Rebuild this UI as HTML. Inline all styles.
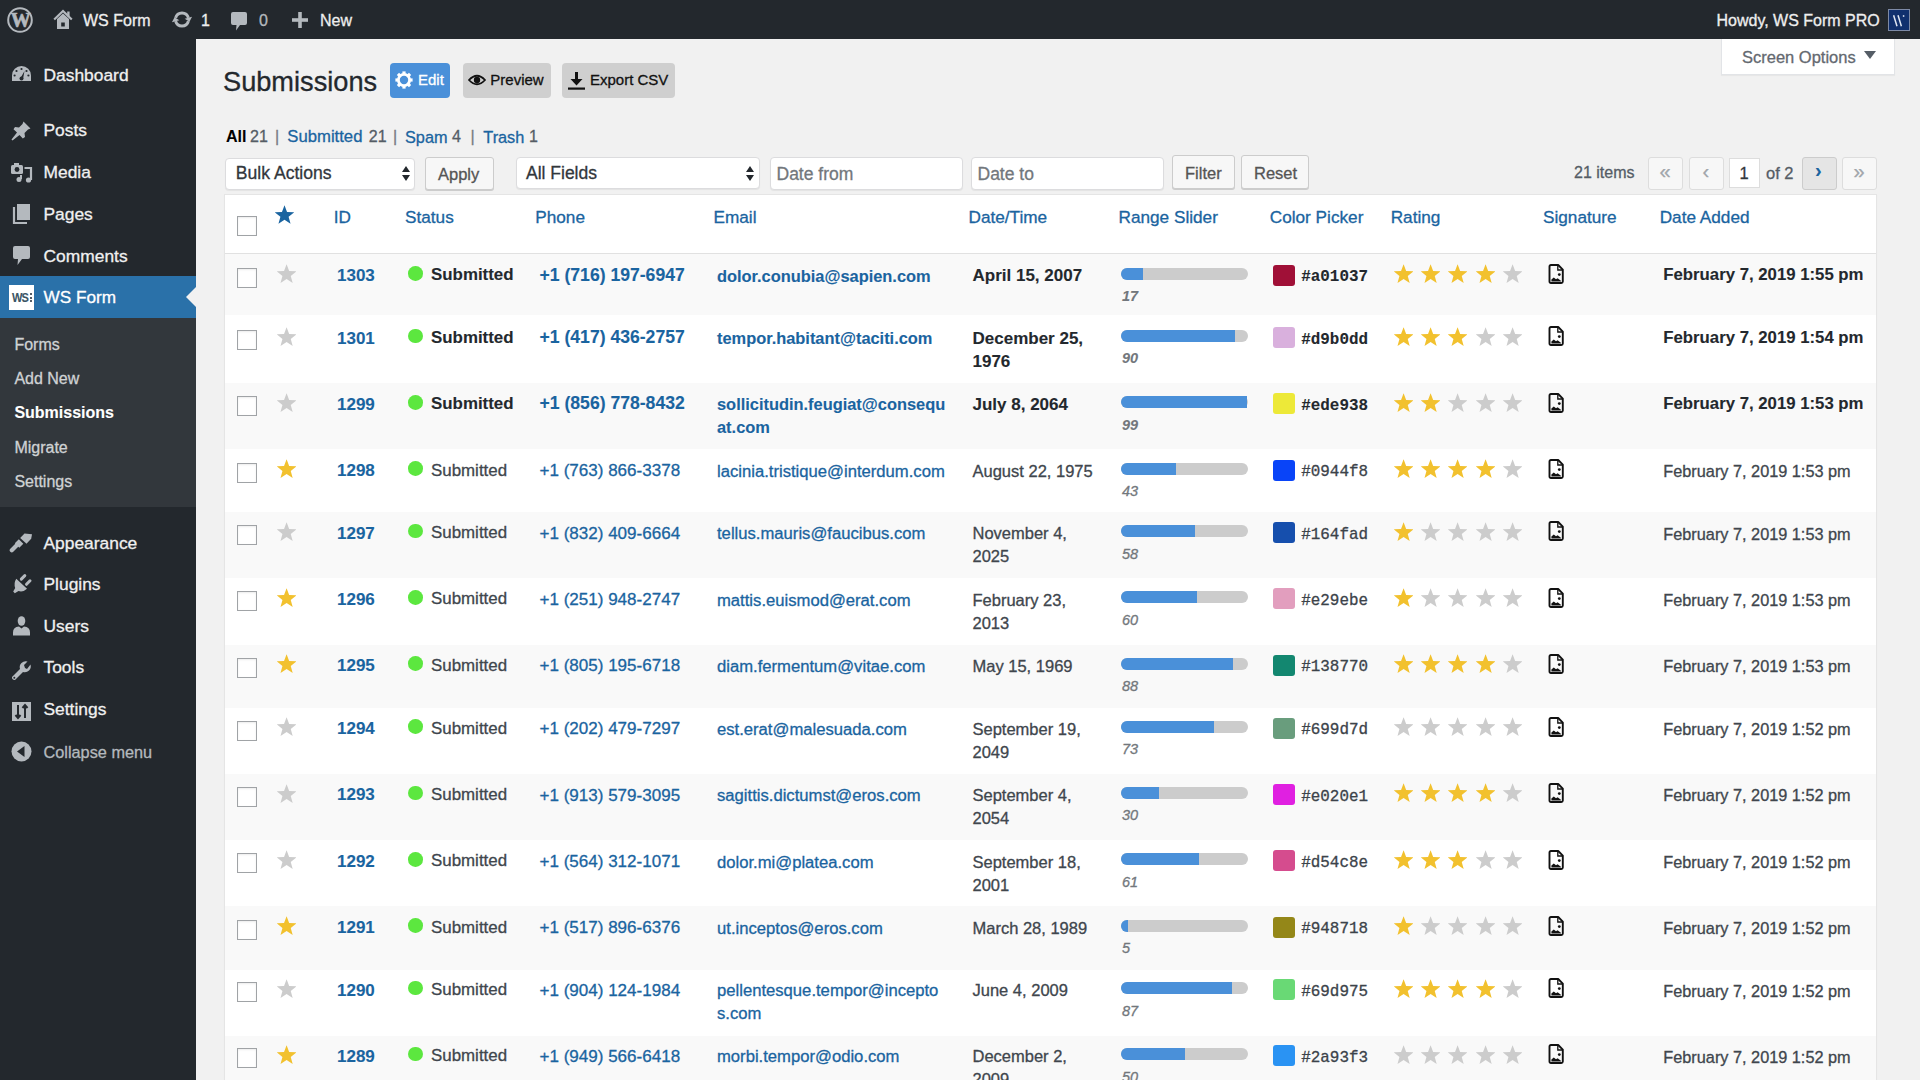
<!DOCTYPE html>
<html><head><meta charset="utf-8"><title>Submissions</title>
<style>
*{margin:0;padding:0;box-sizing:border-box}
html,body{width:1920px;height:1080px;overflow:hidden}
body{background:#f1f1f1;font-family:"Liberation Sans",sans-serif;position:relative}
.a{position:absolute;white-space:nowrap;line-height:1.117;-webkit-text-stroke-width:0.3px}
.a.w{-webkit-text-stroke-width:0.1px}
.b{position:absolute;display:block}
</style></head><body>
<div class="b" style="left:0.00px;top:0.00px;width:1920.00px;height:39.00px;background:#23282d"></div>
<svg class="b" style="left:7.00px;top:6.50px" width="26" height="26" viewBox="0 0 26 26"><circle cx="13" cy="13" r="11.8" fill="none" stroke="#b4b9be" stroke-width="2"/><text x="13" y="20" text-anchor="middle" font-family="Liberation Serif" font-weight="700" font-size="20" fill="#b4b9be" stroke="#b4b9be" stroke-width="0.7" letter-spacing="-1.5">W</text></svg>
<svg class="b" style="left:53.00px;top:9.00px" width="20" height="21" viewBox="0 0 20 21"><path d="M1.2 10.5 L10 2 L18.8 10.5" fill="none" stroke="#b4b9be" stroke-width="2.2"/><rect x="14.2" y="2.5" width="2.4" height="5" fill="#b4b9be"/><path d="M4 10 L10 4.6 L16 10 V20 H4 Z M8.2 13.5 V17.5 H11.8 V13.5 Z" fill="#b4b9be" fill-rule="evenodd"/></svg>
<div class="a" style="left:83.00px;top:11.62px;font-size:16px;color:#eeeeee;">WS Form</div>
<svg class="b" style="left:170.00px;top:9.50px" width="24" height="19" viewBox="0 0 24 19"><path d="M5.63 7.79 A6.6 6.6 0 0 1 18.38 7.79" fill="none" stroke="#b4b9be" stroke-width="3"/><path d="M14.7 8.77 L22.05 6.81 L19.46 11.85 Z" fill="#b4b9be"/><path d="M18.38 11.21 A6.6 6.6 0 0 1 5.63 11.21" fill="none" stroke="#b4b9be" stroke-width="3"/><path d="M9.3 10.23 L1.95 12.19 L4.54 7.15 Z" fill="#b4b9be"/></svg>
<div class="a" style="left:201.00px;top:11.62px;font-size:16px;color:#eeeeee;">1</div>
<svg class="b" style="left:230.00px;top:10.50px" width="18" height="20" viewBox="0 0 18 20"><path d="M3 1 H15 Q17 1 17 3 V12 Q17 14 15 14 H10 L6 19.5 L6.5 14 H3 Q1 14 1 12 V3 Q1 1 3 1 Z" fill="#b4b9be"/></svg>
<div class="a" style="left:259.00px;top:11.62px;font-size:16px;color:#b4b9be;">0</div>
<svg class="b" style="left:291.00px;top:12.00px" width="18" height="16" viewBox="0 0 18 16"><rect x="7.2" y="0" width="3.6" height="16" fill="#b4b9be"/><rect x="1" y="6.2" width="16" height="3.6" fill="#b4b9be"/></svg>
<div class="a" style="left:320.00px;top:11.62px;font-size:16px;color:#eeeeee;">New</div>
<div class="a" style="left:1716.50px;top:11.62px;font-size:16px;color:#eeeeee;">Howdy, WS Form PRO</div>
<div class="b" style="left:1888.00px;top:9.00px;width:22.00px;height:22.00px;background:#10306e;border:1px solid #7d8aa6"></div>
<svg class="b" style="left:1888.00px;top:9.00px" width="22" height="22" viewBox="0 0 22 22"><path d="M5.6 6.2 L9 17.2 M10 6.2 L13.4 17.2" stroke="#dfe6f2" stroke-width="1.5"/><circle cx="15.6" cy="7" r="0.9" fill="#c8d2e6"/></svg>
<div class="b" style="left:0.00px;top:39.00px;width:196.00px;height:1041.00px;background:#23282d"></div>
<div class="b" style="left:0.00px;top:275.50px;width:196.00px;height:42.50px;background:#2a71a9"></div>
<div class="b" style="left:0.00px;top:318.00px;width:196.00px;height:189.00px;background:#32373c"></div>
<svg class="b" style="left:186.00px;top:287.00px" width="10" height="20" viewBox="0 0 10 20"><path d="M10 0 L0 10 L10 20 Z" fill="#f1f1f1"/></svg>
<div class="a" style="left:43.50px;top:66.10px;font-size:17.4px;color:#f0f0f0;">Dashboard</div>
<div class="a" style="left:43.50px;top:121.15px;font-size:17.4px;color:#f0f0f0;">Posts</div>
<div class="a" style="left:43.50px;top:162.85px;font-size:17.4px;color:#f0f0f0;">Media</div>
<div class="a" style="left:43.50px;top:204.55px;font-size:17.4px;color:#f0f0f0;">Pages</div>
<div class="a" style="left:43.50px;top:246.55px;font-size:17.4px;color:#f0f0f0;">Comments</div>
<div class="a" style="left:43.50px;top:288.03px;font-size:17.2px;color:#ffffff;">WS Form</div>
<div class="a" style="left:43.50px;top:533.75px;font-size:17.4px;color:#f0f0f0;">Appearance</div>
<div class="a" style="left:43.50px;top:575.15px;font-size:17.4px;color:#f0f0f0;">Plugins</div>
<div class="a" style="left:43.50px;top:616.85px;font-size:17.4px;color:#f0f0f0;">Users</div>
<div class="a" style="left:43.50px;top:658.45px;font-size:17.4px;color:#f0f0f0;">Tools</div>
<div class="a" style="left:43.50px;top:700.35px;font-size:17.4px;color:#f0f0f0;">Settings</div>
<div class="a" style="left:43.50px;top:743.05px;font-size:16.3px;color:#b4b9be;">Collapse menu</div>
<div class="a" style="left:14.40px;top:335.72px;font-size:16px;color:#cfd2d4;">Forms</div>
<div class="a" style="left:14.40px;top:370.02px;font-size:16px;color:#cfd2d4;">Add New</div>
<div class="a w" style="left:14.40px;top:403.72px;font-size:16px;color:#ffffff;font-weight:700;">Submissions</div>
<div class="a" style="left:14.40px;top:438.62px;font-size:16px;color:#cfd2d4;">Migrate</div>
<div class="a" style="left:14.40px;top:472.82px;font-size:16px;color:#cfd2d4;">Settings</div>
<svg class="b" style="left:11.00px;top:65.00px" width="21" height="18" viewBox="0 0 21 18"><path d="M10.5 1 A9.5 9.5 0 0 0 1 10.5 V16 H20 V10.5 A9.5 9.5 0 0 0 10.5 1 Z" fill="#b4b9be"/><g fill="#23282d"><circle cx="10.5" cy="4" r="1.1"/><circle cx="5.5" cy="6" r="1.1"/><circle cx="15.5" cy="6" r="1.1"/><circle cx="3.6" cy="10.5" r="1.1"/><circle cx="17.4" cy="10.5" r="1.1"/><path d="M9 14 L13.5 6 L12 14 Z"/><circle cx="10.5" cy="13.5" r="2"/></g></svg>
<svg class="b" style="left:10.00px;top:120.00px" width="22" height="21" viewBox="0 0 22 21"><path d="M13.5 1.5 L20.5 8.5 L18 9.5 L14.5 13 L15 17 L12.8 18.5 L9.5 15 L2.5 20.5 L1.5 19.5 L7 12.5 L3.5 9.2 L5 7 L9 7.5 L12.5 4 Z" fill="#b4b9be"/></svg>
<svg class="b" style="left:10.00px;top:162.00px" width="23" height="21" viewBox="0 0 23 21"><rect x="1" y="3" width="12" height="9" rx="1.5" fill="#b4b9be"/><rect x="4" y="1" width="5" height="3" fill="#b4b9be"/><circle cx="7" cy="7.5" r="2.4" fill="#23282d"/><path d="M14.5 6 H21 V18" fill="none" stroke="#b4b9be" stroke-width="2.2"/><circle cx="18.5" cy="18" r="2.6" fill="#b4b9be"/><path d="M11 13 V17" stroke="#b4b9be" stroke-width="2"/><circle cx="9" cy="17.5" r="2.5" fill="#b4b9be"/></svg>
<svg class="b" style="left:12.00px;top:203.00px" width="19" height="21" viewBox="0 0 19 21"><rect x="5" y="1" width="13" height="16" fill="#b4b9be"/><path d="M2 4 V20 H15" fill="none" stroke="#b4b9be" stroke-width="2.2"/></svg>
<svg class="b" style="left:12.00px;top:245.00px" width="19" height="21" viewBox="0 0 19 21"><path d="M3 1 H16 Q18 1 18 3 V12 Q18 14 16 14 H10 L5.5 20 L6 14 H3 Q1 14 1 12 V3 Q1 1 3 1 Z" fill="#b4b9be"/></svg>
<div class="b" style="left:9.00px;top:284.50px;width:25.00px;height:25.00px;background:#ffffff"></div>
<div class="a w" style="left:12.30px;top:290.63px;font-size:13px;color:#3a5566;font-weight:700;letter-spacing:-1px;transform:scaleX(0.85);transform-origin:0 0">WS</div>
<div class="b" style="left:29.50px;top:293.00px;width:2.20px;height:2.20px;background:#555d66"></div>
<div class="b" style="left:29.50px;top:296.60px;width:2.20px;height:2.20px;background:#555d66"></div>
<div class="b" style="left:29.50px;top:300.00px;width:2.20px;height:2.20px;background:#555d66"></div>
<svg class="b" style="left:9.00px;top:532.00px" width="24" height="21" viewBox="0 0 24 21"><path d="M2.8 18.2 L8.5 12.5" stroke="#b4b9be" stroke-width="4.2" stroke-linecap="round"/><path d="M5.8 11.2 L9.8 7.2 L14.3 11.7 L10.3 15.7 Z" fill="#b4b9be"/><path d="M11.2 6 L15.5 1.5 L23 2.2 L22.2 6.8 L17.5 11.8 Z" fill="#b4b9be"/></svg>
<svg class="b" style="left:9.00px;top:572.00px" width="24" height="22" viewBox="0 0 24 22"><path d="M7.3 6.7 L18 16.7 Q14 20.5 9.5 19 L5.8 21.2 L4.2 19.6 L6.2 16 Q4.5 11 7.3 6.7 Z" fill="#b4b9be"/><path d="M12.3 7.1 L15.8 3.6 M17.5 12.3 L21 8.8" stroke="#b4b9be" stroke-width="3" stroke-linecap="round"/></svg>
<svg class="b" style="left:12.00px;top:615.00px" width="19" height="21" viewBox="0 0 19 21"><ellipse cx="9.5" cy="6" rx="3.8" ry="4.8" fill="#b4b9be"/><path d="M1 20.5 V17.5 Q1 12 7 11.5 L9.5 13.5 L12 11.5 Q18 12 18 17.5 V20.5 Z" fill="#b4b9be"/></svg>
<svg class="b" style="left:11.00px;top:660.00px" width="21" height="21" viewBox="0 0 21 21"><path d="M19.5 4.5 A6 6 0 0 1 12 12 L4 20 A2.5 2.5 0 0 1 1 17 L9 9 A6 6 0 0 1 16.5 1.5 L13 5 L14 8 L16 9 Z" fill="#b4b9be"/><circle cx="3.3" cy="17.7" r="1" fill="#23282d"/></svg>
<svg class="b" style="left:12.00px;top:702.00px" width="19" height="19" viewBox="0 0 19 19"><rect x="0" y="0" width="19" height="19" fill="#b4b9be"/><path d="M6 3 V16 M3.5 13 L6 16 L8.5 13 M13 16 V3 M10.5 6 L13 3 L15.5 6" stroke="#23282d" stroke-width="2" fill="none"/></svg>
<svg class="b" style="left:11.00px;top:741.00px" width="21" height="21" viewBox="0 0 21 21"><circle cx="10.5" cy="10.5" r="10" fill="#b4b9be"/><path d="M13.5 5 V16 L6 10.5 Z" fill="#23282d"/></svg>
<div class="b" style="left:1721.00px;top:39.00px;width:174.00px;height:35.50px;background:#ffffff;border:1px solid #e2e4e7;border-top:none;box-shadow:0 1px 1px rgba(0,0,0,.04)"></div>
<div class="a" style="left:1742.00px;top:47.67px;font-size:16.5px;color:#646970;">Screen Options</div>
<svg class="b" style="left:1864.00px;top:51.00px" width="12" height="8" viewBox="0 0 12 8"><path d="M0 0 H12 L6 8 Z" fill="#555d66"/></svg>
<div class="a" style="left:223.00px;top:66.58px;font-size:27.2px;color:#23282d;">Submissions</div>
<div class="b" style="left:390.00px;top:62.75px;width:60.00px;height:35.00px;background:#4a90d9;border-radius:4px"></div>
<svg class="b" style="left:395.00px;top:71.00px" width="18" height="18" viewBox="0 0 18 18"><g transform="translate(9 9)"><circle r="5.6" fill="none" stroke="#fff" stroke-width="2.8"/><rect x="-1.6" y="-8.6" width="3.2" height="3.6" fill="#fff" transform="rotate(0)"/><rect x="-1.6" y="-8.6" width="3.2" height="3.6" fill="#fff" transform="rotate(45)"/><rect x="-1.6" y="-8.6" width="3.2" height="3.6" fill="#fff" transform="rotate(90)"/><rect x="-1.6" y="-8.6" width="3.2" height="3.6" fill="#fff" transform="rotate(135)"/><rect x="-1.6" y="-8.6" width="3.2" height="3.6" fill="#fff" transform="rotate(180)"/><rect x="-1.6" y="-8.6" width="3.2" height="3.6" fill="#fff" transform="rotate(225)"/><rect x="-1.6" y="-8.6" width="3.2" height="3.6" fill="#fff" transform="rotate(270)"/><rect x="-1.6" y="-8.6" width="3.2" height="3.6" fill="#fff" transform="rotate(315)"/></g></svg>
<div class="a" style="left:418.00px;top:72.02px;font-size:15px;color:#ffffff;">Edit</div>
<div class="b" style="left:462.50px;top:63.00px;width:88.00px;height:34.50px;background:#cfcfcf;border-radius:4px"></div>
<svg class="b" style="left:468.00px;top:74.00px" width="18" height="12" viewBox="0 0 18 12"><path d="M1 6 Q9 -2.5 17 6 Q9 14.5 1 6 Z" fill="none" stroke="#111" stroke-width="1.8"/><circle cx="9" cy="6" r="3.2" fill="#111"/></svg>
<div class="a" style="left:490.30px;top:72.02px;font-size:15px;color:#111111;">Preview</div>
<div class="b" style="left:562.00px;top:63.00px;width:112.50px;height:34.50px;background:#cfcfcf;border-radius:4px"></div>
<svg class="b" style="left:568.00px;top:72.00px" width="17" height="18" viewBox="0 0 17 18"><rect x="7" y="0" width="3" height="9" fill="#111"/><path d="M2.5 7 H14.5 L8.5 13.5 Z" fill="#111"/><rect x="0" y="15.5" width="17" height="2.2" fill="#111"/></svg>
<div class="a" style="left:590.00px;top:72.02px;font-size:15px;color:#111111;">Export CSV</div>
<div class="a w" style="left:226.00px;top:127.82px;font-size:16px;color:#000000;font-weight:700;">All</div>
<div class="a" style="left:250.00px;top:128.22px;font-size:16px;color:#555d66;">21</div>
<div class="a" style="left:275.00px;top:128.22px;font-size:16px;color:#787c82;">|</div>
<div class="a" style="left:287.30px;top:127.59px;font-size:16.7px;color:#1a64a0;">Submitted</div>
<div class="a" style="left:368.75px;top:128.22px;font-size:16px;color:#555d66;">21</div>
<div class="a" style="left:393.00px;top:128.22px;font-size:16px;color:#787c82;">|</div>
<div class="a" style="left:405.00px;top:127.95px;font-size:16.3px;color:#1a64a0;">Spam</div>
<div class="a" style="left:452.00px;top:128.22px;font-size:16px;color:#555d66;">4</div>
<div class="a" style="left:470.50px;top:128.22px;font-size:16px;color:#787c82;">|</div>
<div class="a" style="left:483.30px;top:127.95px;font-size:16.3px;color:#1a64a0;">Trash</div>
<div class="a" style="left:529.00px;top:128.22px;font-size:16px;color:#555d66;">1</div>
<div class="b" style="left:224.75px;top:157.50px;width:190.50px;height:32.50px;background:#fff;border:1px solid #dcdcde;border-radius:4px;box-shadow:0 1px 1px rgba(0,0,0,.06)"></div>
<div class="a" style="left:235.75px;top:164.07px;font-size:17.6px;color:#32373c;">Bulk Actions</div>
<svg class="b" style="left:402.00px;top:165.50px" width="8" height="15" viewBox="0 0 8 15"><path d="M0 6 L4 0 L8 6 Z M0 9 L4 15 L8 9 Z" fill="#23282d"/></svg>
<div class="b" style="left:424.60px;top:156.60px;width:69.00px;height:33.80px;background:#f7f7f7;border:1px solid #cccccc;border-radius:3px;box-shadow:0 1px 0 #cccccc"></div>
<div class="a" style="left:438.00px;top:165.07px;font-size:16.5px;color:#555555;">Apply</div>
<div class="b" style="left:516.00px;top:157.00px;width:243.50px;height:32.00px;background:#fff;border:1px solid #dcdcde;border-radius:4px;box-shadow:0 1px 1px rgba(0,0,0,.06)"></div>
<div class="a" style="left:526.00px;top:164.16px;font-size:17.5px;color:#32373c;">All Fields</div>
<svg class="b" style="left:746.00px;top:165.50px" width="8" height="15" viewBox="0 0 8 15"><path d="M0 6 L4 0 L8 6 Z M0 9 L4 15 L8 9 Z" fill="#23282d"/></svg>
<div class="b" style="left:770.00px;top:156.70px;width:193.20px;height:33.50px;background:#fff;border:1px solid #dcdcde;border-radius:4px;box-shadow:0 1px 1px rgba(0,0,0,.06)"></div>
<div class="a" style="left:776.50px;top:164.76px;font-size:17.5px;color:#72777c;">Date from</div>
<div class="b" style="left:971.40px;top:156.70px;width:193.00px;height:33.50px;background:#fff;border:1px solid #dcdcde;border-radius:4px;box-shadow:0 1px 1px rgba(0,0,0,.06)"></div>
<div class="a" style="left:977.50px;top:164.76px;font-size:17.5px;color:#72777c;">Date to</div>
<div class="b" style="left:1171.70px;top:155.20px;width:63.50px;height:34.00px;background:#f7f7f7;border:1px solid #cccccc;border-radius:3px;box-shadow:0 1px 0 #cccccc"></div>
<div class="a" style="left:1185.00px;top:163.67px;font-size:16.5px;color:#555555;">Filter</div>
<div class="b" style="left:1240.50px;top:155.20px;width:68.20px;height:34.00px;background:#f7f7f7;border:1px solid #cccccc;border-radius:3px;box-shadow:0 1px 0 #cccccc"></div>
<div class="a" style="left:1254.00px;top:163.67px;font-size:16.5px;color:#555555;">Reset</div>
<div class="a" style="left:1574.00px;top:164.12px;font-size:16px;color:#555d66;">21 items</div>
<div class="b" style="left:1648.00px;top:156.50px;width:35.40px;height:33.00px;background:#f7f7f7;border:1px solid #dddddd;border-radius:3px"></div>
<div class="a" style="left:1659.50px;top:159.50px;font-size:20px;color:#a0a5aa;">&laquo;</div>
<div class="b" style="left:1688.70px;top:156.50px;width:35.00px;height:33.00px;background:#f7f7f7;border:1px solid #dddddd;border-radius:3px"></div>
<div class="a" style="left:1702.50px;top:159.50px;font-size:20px;color:#a0a5aa;">&lsaquo;</div>
<div class="b" style="left:1729.00px;top:157.70px;width:30.60px;height:30.70px;background:#fff;border:1px solid #dddddd"></div>
<div class="a" style="left:1739.50px;top:164.17px;font-size:16.5px;color:#32373c;">1</div>
<div class="a" style="left:1766.00px;top:164.17px;font-size:16.5px;color:#555d66;">of 2</div>
<div class="b" style="left:1801.70px;top:156.50px;width:35.40px;height:33.00px;background:#e5e5e5;border:1px solid #cccccc;border-radius:3px"></div>
<div class="a w" style="left:1815.00px;top:159.10px;font-size:20px;color:#1a64a0;font-weight:700;">&rsaquo;</div>
<div class="b" style="left:1842.00px;top:156.50px;width:34.50px;height:33.00px;background:#f7f7f7;border:1px solid #dddddd;border-radius:3px"></div>
<div class="a" style="left:1853.50px;top:159.50px;font-size:20px;color:#a0a5aa;">&raquo;</div>
<div class="b" style="left:224.00px;top:194.00px;width:1652.50px;height:888.00px;background:#fff;border:1px solid #e5e5e5;box-shadow:0 1px 1px rgba(0,0,0,.04)"></div>
<div class="b" style="left:225.00px;top:253.50px;width:1650.50px;height:61.50px;background:#f9f9f9"></div>
<div class="b" style="left:225.00px;top:383.00px;width:1650.50px;height:66.00px;background:#f9f9f9"></div>
<div class="b" style="left:225.00px;top:512.00px;width:1650.50px;height:66.30px;background:#f9f9f9"></div>
<div class="b" style="left:225.00px;top:644.60px;width:1650.50px;height:63.40px;background:#f9f9f9"></div>
<div class="b" style="left:225.00px;top:774.10px;width:1650.50px;height:66.10px;background:#f9f9f9"></div>
<div class="b" style="left:225.00px;top:906.30px;width:1650.50px;height:63.30px;background:#f9f9f9"></div>
<div class="b" style="left:225.00px;top:1035.70px;width:1650.50px;height:66.30px;background:#f9f9f9"></div>
<div class="b" style="left:225.00px;top:252.50px;width:1650.50px;height:1.00px;background:#e1e1e1"></div>
<div class="b" style="left:237.30px;top:216.00px;width:20.00px;height:20.00px;background:#fff;border:1.3px solid #a0a3a6;box-shadow:inset 0 1px 2px rgba(0,0,0,.08)"></div>
<svg class="b" style="left:274.50px;top:205.20px" width="19" height="19" viewBox="0 0 19 19"><polygon points="9.50,0.21 12.04,6.99 19.27,7.31 13.60,11.81 15.54,18.79 9.50,14.79 3.46,18.79 5.40,11.81 -0.27,7.31 6.96,6.99" fill="#1a64a0"/></svg>
<div class="a" style="left:333.75px;top:208.13px;font-size:17.2px;color:#1a64a0;">ID</div>
<div class="a" style="left:405.00px;top:208.13px;font-size:17.2px;color:#1a64a0;">Status</div>
<div class="a" style="left:535.25px;top:208.13px;font-size:17.2px;color:#1a64a0;">Phone</div>
<div class="a" style="left:713.50px;top:208.13px;font-size:17.2px;color:#1a64a0;">Email</div>
<div class="a" style="left:968.50px;top:208.13px;font-size:17.2px;color:#1a64a0;">Date/Time</div>
<div class="a" style="left:1118.50px;top:208.13px;font-size:17.2px;color:#1a64a0;">Range Slider</div>
<div class="a" style="left:1269.75px;top:208.13px;font-size:17.2px;color:#1a64a0;">Color Picker</div>
<div class="a" style="left:1390.70px;top:208.13px;font-size:17.2px;color:#1a64a0;">Rating</div>
<div class="a" style="left:1543.00px;top:208.13px;font-size:17.2px;color:#1a64a0;">Signature</div>
<div class="a" style="left:1659.70px;top:208.13px;font-size:17.2px;color:#1a64a0;">Date Added</div>
<div class="b" style="left:237.30px;top:267.50px;width:20.00px;height:20.00px;background:#fff;border:1.3px solid #a0a3a6;box-shadow:inset 0 1px 2px rgba(0,0,0,.08)"></div>
<svg class="b" style="left:277.05px;top:264.25px" width="19.2" height="19.2" viewBox="0 0 19.2 19.2"><polygon points="9.60,0.21 12.16,7.06 19.47,7.38 13.75,11.94 15.70,18.99 9.60,14.95 3.50,18.99 5.45,11.94 -0.27,7.38 7.04,7.06" fill="#cccccc"/></svg>
<div class="a w" style="left:337.00px;top:266.06px;font-size:17px;color:#1a64a0;font-weight:700;">1303</div>
<div class="b" style="left:408.30px;top:266.25px;width:14.60px;height:14.60px;background:#5ce73f;border-radius:50%"></div>
<div class="a w" style="left:431.00px;top:266.16px;font-size:16.9px;color:#23282d;font-weight:700;">Submitted</div>
<div class="a w" style="left:539.50px;top:265.52px;font-size:17.6px;color:#1a64a0;font-weight:700;">+1 (716) 197-6947</div>
<div class="a w" style="left:717.00px;top:266.61px;font-size:16.4px;color:#1a64a0;font-weight:700;line-height:23px;margin-top:-2.01px">dolor.conubia@sapien.com</div>
<div class="a w" style="left:972.50px;top:266.06px;font-size:17px;color:#23282d;font-weight:700;line-height:23px;margin-top:-2.01px">April 15, 2007</div>
<div class="b" style="left:1121.40px;top:267.65px;width:126.60px;height:12.00px;background:#cccccc;border-radius:6px;overflow:hidden"></div>
<div class="b" style="left:1121.40px;top:267.65px;width:21.52px;height:12.00px;background:#4a90d9;border-radius:6px 0 0 6px"></div>
<div class="a w" style="left:1122.00px;top:287.83px;font-size:14.5px;color:#72777c;font-weight:700;font-style:italic">17</div>
<div class="b" style="left:1272.50px;top:264.50px;width:22.00px;height:21.00px;background:#a01037;border-radius:3px"></div>
<div class="a w" style="left:1301.25px;top:269.06px;font-size:15.9px;color:#23282d;font-weight:700;font-family:Liberation Mono">#a01037</div>
<svg class="b" style="left:1393.90px;top:264.20px" width="19.2" height="19.2" viewBox="0 0 19.2 19.2"><polygon points="9.60,0.21 12.16,7.06 19.47,7.38 13.75,11.94 15.70,18.99 9.60,14.95 3.50,18.99 5.45,11.94 -0.27,7.38 7.04,7.06" fill="#f2c12e"/></svg>
<svg class="b" style="left:1421.10px;top:264.20px" width="19.2" height="19.2" viewBox="0 0 19.2 19.2"><polygon points="9.60,0.21 12.16,7.06 19.47,7.38 13.75,11.94 15.70,18.99 9.60,14.95 3.50,18.99 5.45,11.94 -0.27,7.38 7.04,7.06" fill="#f2c12e"/></svg>
<svg class="b" style="left:1448.30px;top:264.20px" width="19.2" height="19.2" viewBox="0 0 19.2 19.2"><polygon points="9.60,0.21 12.16,7.06 19.47,7.38 13.75,11.94 15.70,18.99 9.60,14.95 3.50,18.99 5.45,11.94 -0.27,7.38 7.04,7.06" fill="#f2c12e"/></svg>
<svg class="b" style="left:1475.50px;top:264.20px" width="19.2" height="19.2" viewBox="0 0 19.2 19.2"><polygon points="9.60,0.21 12.16,7.06 19.47,7.38 13.75,11.94 15.70,18.99 9.60,14.95 3.50,18.99 5.45,11.94 -0.27,7.38 7.04,7.06" fill="#f2c12e"/></svg>
<svg class="b" style="left:1502.70px;top:264.20px" width="19.2" height="19.2" viewBox="0 0 19.2 19.2"><polygon points="9.60,0.21 12.16,7.06 19.47,7.38 13.75,11.94 15.70,18.99 9.60,14.95 3.50,18.99 5.45,11.94 -0.27,7.38 7.04,7.06" fill="#cccccc"/></svg>
<svg class="b" style="left:1548.00px;top:263.85px" width="16" height="20" viewBox="0 0 16 20"><path d="M3 1 H10.2 L14.8 5.6 V17.5 Q14.8 19 13.3 19 H3 Q1.5 19 1.5 17.5 V2.5 Q1.5 1 3 1 Z" fill="none" stroke="#111" stroke-width="1.9" stroke-linejoin="round"/><path d="M9.8 1.5 V6 H14.3" fill="none" stroke="#111" stroke-width="1.3"/><circle cx="11.3" cy="10.6" r="1.4" fill="#111"/><path d="M3.4 17.4 V15.6 L5.8 13.4 L8 15.3 L9.6 14.3 L12.9 16.8 V17.4 Z" fill="#111"/></svg>
<div class="a w" style="left:1663.30px;top:266.29px;font-size:16.75px;color:#23282d;font-weight:700;">February 7, 2019 1:55 pm</div>
<div class="b" style="left:237.30px;top:330.00px;width:20.00px;height:20.00px;background:#fff;border:1.3px solid #a0a3a6;box-shadow:inset 0 1px 2px rgba(0,0,0,.08)"></div>
<svg class="b" style="left:277.05px;top:326.75px" width="19.2" height="19.2" viewBox="0 0 19.2 19.2"><polygon points="9.60,0.21 12.16,7.06 19.47,7.38 13.75,11.94 15.70,18.99 9.60,14.95 3.50,18.99 5.45,11.94 -0.27,7.38 7.04,7.06" fill="#cccccc"/></svg>
<div class="a w" style="left:337.00px;top:328.56px;font-size:17px;color:#1a64a0;font-weight:700;">1301</div>
<div class="b" style="left:408.30px;top:328.75px;width:14.60px;height:14.60px;background:#5ce73f;border-radius:50%"></div>
<div class="a w" style="left:431.00px;top:328.66px;font-size:16.9px;color:#23282d;font-weight:700;">Submitted</div>
<div class="a w" style="left:539.50px;top:328.02px;font-size:17.6px;color:#1a64a0;font-weight:700;">+1 (417) 436-2757</div>
<div class="a w" style="left:717.00px;top:329.11px;font-size:16.4px;color:#1a64a0;font-weight:700;line-height:23px;margin-top:-2.01px">tempor.habitant@taciti.com</div>
<div class="a w" style="left:972.50px;top:328.56px;font-size:17px;color:#23282d;font-weight:700;line-height:23px;margin-top:-2.01px">December 25,<br>1976</div>
<div class="b" style="left:1121.40px;top:330.15px;width:126.60px;height:12.00px;background:#cccccc;border-radius:6px;overflow:hidden"></div>
<div class="b" style="left:1121.40px;top:330.15px;width:113.94px;height:12.00px;background:#4a90d9;border-radius:6px 0 0 6px"></div>
<div class="a w" style="left:1122.00px;top:350.33px;font-size:14.5px;color:#72777c;font-weight:700;font-style:italic">90</div>
<div class="b" style="left:1272.50px;top:327.00px;width:22.00px;height:21.00px;background:#d9b0dd;border-radius:3px"></div>
<div class="a w" style="left:1301.25px;top:331.56px;font-size:15.9px;color:#23282d;font-weight:700;font-family:Liberation Mono">#d9b0dd</div>
<svg class="b" style="left:1393.90px;top:326.70px" width="19.2" height="19.2" viewBox="0 0 19.2 19.2"><polygon points="9.60,0.21 12.16,7.06 19.47,7.38 13.75,11.94 15.70,18.99 9.60,14.95 3.50,18.99 5.45,11.94 -0.27,7.38 7.04,7.06" fill="#f2c12e"/></svg>
<svg class="b" style="left:1421.10px;top:326.70px" width="19.2" height="19.2" viewBox="0 0 19.2 19.2"><polygon points="9.60,0.21 12.16,7.06 19.47,7.38 13.75,11.94 15.70,18.99 9.60,14.95 3.50,18.99 5.45,11.94 -0.27,7.38 7.04,7.06" fill="#f2c12e"/></svg>
<svg class="b" style="left:1448.30px;top:326.70px" width="19.2" height="19.2" viewBox="0 0 19.2 19.2"><polygon points="9.60,0.21 12.16,7.06 19.47,7.38 13.75,11.94 15.70,18.99 9.60,14.95 3.50,18.99 5.45,11.94 -0.27,7.38 7.04,7.06" fill="#f2c12e"/></svg>
<svg class="b" style="left:1475.50px;top:326.70px" width="19.2" height="19.2" viewBox="0 0 19.2 19.2"><polygon points="9.60,0.21 12.16,7.06 19.47,7.38 13.75,11.94 15.70,18.99 9.60,14.95 3.50,18.99 5.45,11.94 -0.27,7.38 7.04,7.06" fill="#cccccc"/></svg>
<svg class="b" style="left:1502.70px;top:326.70px" width="19.2" height="19.2" viewBox="0 0 19.2 19.2"><polygon points="9.60,0.21 12.16,7.06 19.47,7.38 13.75,11.94 15.70,18.99 9.60,14.95 3.50,18.99 5.45,11.94 -0.27,7.38 7.04,7.06" fill="#cccccc"/></svg>
<svg class="b" style="left:1548.00px;top:326.35px" width="16" height="20" viewBox="0 0 16 20"><path d="M3 1 H10.2 L14.8 5.6 V17.5 Q14.8 19 13.3 19 H3 Q1.5 19 1.5 17.5 V2.5 Q1.5 1 3 1 Z" fill="none" stroke="#111" stroke-width="1.9" stroke-linejoin="round"/><path d="M9.8 1.5 V6 H14.3" fill="none" stroke="#111" stroke-width="1.3"/><circle cx="11.3" cy="10.6" r="1.4" fill="#111"/><path d="M3.4 17.4 V15.6 L5.8 13.4 L8 15.3 L9.6 14.3 L12.9 16.8 V17.4 Z" fill="#111"/></svg>
<div class="a w" style="left:1663.30px;top:328.79px;font-size:16.75px;color:#23282d;font-weight:700;">February 7, 2019 1:54 pm</div>
<div class="b" style="left:237.30px;top:396.25px;width:20.00px;height:20.00px;background:#fff;border:1.3px solid #a0a3a6;box-shadow:inset 0 1px 2px rgba(0,0,0,.08)"></div>
<svg class="b" style="left:277.05px;top:393.00px" width="19.2" height="19.2" viewBox="0 0 19.2 19.2"><polygon points="9.60,0.21 12.16,7.06 19.47,7.38 13.75,11.94 15.70,18.99 9.60,14.95 3.50,18.99 5.45,11.94 -0.27,7.38 7.04,7.06" fill="#cccccc"/></svg>
<div class="a w" style="left:337.00px;top:394.81px;font-size:17px;color:#1a64a0;font-weight:700;">1299</div>
<div class="b" style="left:408.30px;top:395.00px;width:14.60px;height:14.60px;background:#5ce73f;border-radius:50%"></div>
<div class="a w" style="left:431.00px;top:394.91px;font-size:16.9px;color:#23282d;font-weight:700;">Submitted</div>
<div class="a w" style="left:539.50px;top:394.27px;font-size:17.6px;color:#1a64a0;font-weight:700;">+1 (856) 778-8432</div>
<div class="a w" style="left:717.00px;top:395.36px;font-size:16.4px;color:#1a64a0;font-weight:700;line-height:23px;margin-top:-2.01px">sollicitudin.feugiat@consequ<br>at.com</div>
<div class="a w" style="left:972.50px;top:394.81px;font-size:17px;color:#23282d;font-weight:700;line-height:23px;margin-top:-2.01px">July 8, 2064</div>
<div class="b" style="left:1121.40px;top:396.40px;width:126.60px;height:12.00px;background:#cccccc;border-radius:6px;overflow:hidden"></div>
<div class="b" style="left:1121.40px;top:396.40px;width:125.33px;height:12.00px;background:#4a90d9;border-radius:6px 0 0 6px"></div>
<div class="a w" style="left:1122.00px;top:416.58px;font-size:14.5px;color:#72777c;font-weight:700;font-style:italic">99</div>
<div class="b" style="left:1272.50px;top:393.25px;width:22.00px;height:21.00px;background:#ede938;border-radius:3px"></div>
<div class="a w" style="left:1301.25px;top:397.81px;font-size:15.9px;color:#23282d;font-weight:700;font-family:Liberation Mono">#ede938</div>
<svg class="b" style="left:1393.90px;top:392.95px" width="19.2" height="19.2" viewBox="0 0 19.2 19.2"><polygon points="9.60,0.21 12.16,7.06 19.47,7.38 13.75,11.94 15.70,18.99 9.60,14.95 3.50,18.99 5.45,11.94 -0.27,7.38 7.04,7.06" fill="#f2c12e"/></svg>
<svg class="b" style="left:1421.10px;top:392.95px" width="19.2" height="19.2" viewBox="0 0 19.2 19.2"><polygon points="9.60,0.21 12.16,7.06 19.47,7.38 13.75,11.94 15.70,18.99 9.60,14.95 3.50,18.99 5.45,11.94 -0.27,7.38 7.04,7.06" fill="#f2c12e"/></svg>
<svg class="b" style="left:1448.30px;top:392.95px" width="19.2" height="19.2" viewBox="0 0 19.2 19.2"><polygon points="9.60,0.21 12.16,7.06 19.47,7.38 13.75,11.94 15.70,18.99 9.60,14.95 3.50,18.99 5.45,11.94 -0.27,7.38 7.04,7.06" fill="#cccccc"/></svg>
<svg class="b" style="left:1475.50px;top:392.95px" width="19.2" height="19.2" viewBox="0 0 19.2 19.2"><polygon points="9.60,0.21 12.16,7.06 19.47,7.38 13.75,11.94 15.70,18.99 9.60,14.95 3.50,18.99 5.45,11.94 -0.27,7.38 7.04,7.06" fill="#cccccc"/></svg>
<svg class="b" style="left:1502.70px;top:392.95px" width="19.2" height="19.2" viewBox="0 0 19.2 19.2"><polygon points="9.60,0.21 12.16,7.06 19.47,7.38 13.75,11.94 15.70,18.99 9.60,14.95 3.50,18.99 5.45,11.94 -0.27,7.38 7.04,7.06" fill="#cccccc"/></svg>
<svg class="b" style="left:1548.00px;top:392.60px" width="16" height="20" viewBox="0 0 16 20"><path d="M3 1 H10.2 L14.8 5.6 V17.5 Q14.8 19 13.3 19 H3 Q1.5 19 1.5 17.5 V2.5 Q1.5 1 3 1 Z" fill="none" stroke="#111" stroke-width="1.9" stroke-linejoin="round"/><path d="M9.8 1.5 V6 H14.3" fill="none" stroke="#111" stroke-width="1.3"/><circle cx="11.3" cy="10.6" r="1.4" fill="#111"/><path d="M3.4 17.4 V15.6 L5.8 13.4 L8 15.3 L9.6 14.3 L12.9 16.8 V17.4 Z" fill="#111"/></svg>
<div class="a w" style="left:1663.30px;top:395.04px;font-size:16.75px;color:#23282d;font-weight:700;">February 7, 2019 1:53 pm</div>
<div class="b" style="left:237.30px;top:462.50px;width:20.00px;height:20.00px;background:#fff;border:1.3px solid #a0a3a6;box-shadow:inset 0 1px 2px rgba(0,0,0,.08)"></div>
<svg class="b" style="left:277.05px;top:459.25px" width="19.2" height="19.2" viewBox="0 0 19.2 19.2"><polygon points="9.60,0.21 12.16,7.06 19.47,7.38 13.75,11.94 15.70,18.99 9.60,14.95 3.50,18.99 5.45,11.94 -0.27,7.38 7.04,7.06" fill="#f2c12e"/></svg>
<div class="a w" style="left:337.00px;top:461.06px;font-size:17px;color:#1a64a0;font-weight:700;">1298</div>
<div class="b" style="left:408.30px;top:461.25px;width:14.60px;height:14.60px;background:#5ce73f;border-radius:50%"></div>
<div class="a" style="left:431.00px;top:461.56px;font-size:16.9px;color:#40464d;">Submitted</div>
<div class="a" style="left:539.50px;top:461.42px;font-size:17.05px;color:#1a64a0;">+1 (763) 866-3378</div>
<div class="a" style="left:717.00px;top:461.78px;font-size:16.65px;color:#1a64a0;line-height:23px;margin-top:-2.01px">lacinia.tristique@interdum.com</div>
<div class="a" style="left:972.50px;top:461.92px;font-size:16.5px;color:#40464d;line-height:23px;margin-top:-2.01px">August 22, 1975</div>
<div class="b" style="left:1121.40px;top:462.65px;width:126.60px;height:12.00px;background:#cccccc;border-radius:6px;overflow:hidden"></div>
<div class="b" style="left:1121.40px;top:462.65px;width:54.44px;height:12.00px;background:#4a90d9;border-radius:6px 0 0 6px"></div>
<div class="a" style="left:1122.00px;top:483.23px;font-size:14.5px;color:#72777c;font-style:italic">43</div>
<div class="b" style="left:1272.50px;top:459.50px;width:22.00px;height:21.00px;background:#0944f8;border-radius:3px"></div>
<div class="a" style="left:1301.25px;top:464.46px;font-size:15.9px;color:#3c434a;font-family:Liberation Mono">#0944f8</div>
<svg class="b" style="left:1393.90px;top:459.20px" width="19.2" height="19.2" viewBox="0 0 19.2 19.2"><polygon points="9.60,0.21 12.16,7.06 19.47,7.38 13.75,11.94 15.70,18.99 9.60,14.95 3.50,18.99 5.45,11.94 -0.27,7.38 7.04,7.06" fill="#f2c12e"/></svg>
<svg class="b" style="left:1421.10px;top:459.20px" width="19.2" height="19.2" viewBox="0 0 19.2 19.2"><polygon points="9.60,0.21 12.16,7.06 19.47,7.38 13.75,11.94 15.70,18.99 9.60,14.95 3.50,18.99 5.45,11.94 -0.27,7.38 7.04,7.06" fill="#f2c12e"/></svg>
<svg class="b" style="left:1448.30px;top:459.20px" width="19.2" height="19.2" viewBox="0 0 19.2 19.2"><polygon points="9.60,0.21 12.16,7.06 19.47,7.38 13.75,11.94 15.70,18.99 9.60,14.95 3.50,18.99 5.45,11.94 -0.27,7.38 7.04,7.06" fill="#f2c12e"/></svg>
<svg class="b" style="left:1475.50px;top:459.20px" width="19.2" height="19.2" viewBox="0 0 19.2 19.2"><polygon points="9.60,0.21 12.16,7.06 19.47,7.38 13.75,11.94 15.70,18.99 9.60,14.95 3.50,18.99 5.45,11.94 -0.27,7.38 7.04,7.06" fill="#f2c12e"/></svg>
<svg class="b" style="left:1502.70px;top:459.20px" width="19.2" height="19.2" viewBox="0 0 19.2 19.2"><polygon points="9.60,0.21 12.16,7.06 19.47,7.38 13.75,11.94 15.70,18.99 9.60,14.95 3.50,18.99 5.45,11.94 -0.27,7.38 7.04,7.06" fill="#cccccc"/></svg>
<svg class="b" style="left:1548.00px;top:458.85px" width="16" height="20" viewBox="0 0 16 20"><path d="M3 1 H10.2 L14.8 5.6 V17.5 Q14.8 19 13.3 19 H3 Q1.5 19 1.5 17.5 V2.5 Q1.5 1 3 1 Z" fill="none" stroke="#111" stroke-width="1.9" stroke-linejoin="round"/><path d="M9.8 1.5 V6 H14.3" fill="none" stroke="#111" stroke-width="1.3"/><circle cx="11.3" cy="10.6" r="1.4" fill="#111"/><path d="M3.4 17.4 V15.6 L5.8 13.4 L8 15.3 L9.6 14.3 L12.9 16.8 V17.4 Z" fill="#111"/></svg>
<div class="a" style="left:1663.30px;top:462.10px;font-size:16.3px;color:#40464d;">February 7, 2019 1:53 pm</div>
<div class="b" style="left:237.30px;top:525.00px;width:20.00px;height:20.00px;background:#fff;border:1.3px solid #a0a3a6;box-shadow:inset 0 1px 2px rgba(0,0,0,.08)"></div>
<svg class="b" style="left:277.05px;top:521.75px" width="19.2" height="19.2" viewBox="0 0 19.2 19.2"><polygon points="9.60,0.21 12.16,7.06 19.47,7.38 13.75,11.94 15.70,18.99 9.60,14.95 3.50,18.99 5.45,11.94 -0.27,7.38 7.04,7.06" fill="#cccccc"/></svg>
<div class="a w" style="left:337.00px;top:523.57px;font-size:17px;color:#1a64a0;font-weight:700;">1297</div>
<div class="b" style="left:408.30px;top:523.75px;width:14.60px;height:14.60px;background:#5ce73f;border-radius:50%"></div>
<div class="a" style="left:431.00px;top:524.06px;font-size:16.9px;color:#40464d;">Submitted</div>
<div class="a" style="left:539.50px;top:523.92px;font-size:17.05px;color:#1a64a0;">+1 (832) 409-6664</div>
<div class="a" style="left:717.00px;top:524.28px;font-size:16.65px;color:#1a64a0;line-height:23px;margin-top:-2.01px">tellus.mauris@faucibus.com</div>
<div class="a" style="left:972.50px;top:524.42px;font-size:16.5px;color:#40464d;line-height:23px;margin-top:-2.01px">November 4,<br>2025</div>
<div class="b" style="left:1121.40px;top:525.15px;width:126.60px;height:12.00px;background:#cccccc;border-radius:6px;overflow:hidden"></div>
<div class="b" style="left:1121.40px;top:525.15px;width:73.43px;height:12.00px;background:#4a90d9;border-radius:6px 0 0 6px"></div>
<div class="a" style="left:1122.00px;top:545.73px;font-size:14.5px;color:#72777c;font-style:italic">58</div>
<div class="b" style="left:1272.50px;top:522.00px;width:22.00px;height:21.00px;background:#164fad;border-radius:3px"></div>
<div class="a" style="left:1301.25px;top:526.96px;font-size:15.9px;color:#3c434a;font-family:Liberation Mono">#164fad</div>
<svg class="b" style="left:1393.90px;top:521.70px" width="19.2" height="19.2" viewBox="0 0 19.2 19.2"><polygon points="9.60,0.21 12.16,7.06 19.47,7.38 13.75,11.94 15.70,18.99 9.60,14.95 3.50,18.99 5.45,11.94 -0.27,7.38 7.04,7.06" fill="#f2c12e"/></svg>
<svg class="b" style="left:1421.10px;top:521.70px" width="19.2" height="19.2" viewBox="0 0 19.2 19.2"><polygon points="9.60,0.21 12.16,7.06 19.47,7.38 13.75,11.94 15.70,18.99 9.60,14.95 3.50,18.99 5.45,11.94 -0.27,7.38 7.04,7.06" fill="#cccccc"/></svg>
<svg class="b" style="left:1448.30px;top:521.70px" width="19.2" height="19.2" viewBox="0 0 19.2 19.2"><polygon points="9.60,0.21 12.16,7.06 19.47,7.38 13.75,11.94 15.70,18.99 9.60,14.95 3.50,18.99 5.45,11.94 -0.27,7.38 7.04,7.06" fill="#cccccc"/></svg>
<svg class="b" style="left:1475.50px;top:521.70px" width="19.2" height="19.2" viewBox="0 0 19.2 19.2"><polygon points="9.60,0.21 12.16,7.06 19.47,7.38 13.75,11.94 15.70,18.99 9.60,14.95 3.50,18.99 5.45,11.94 -0.27,7.38 7.04,7.06" fill="#cccccc"/></svg>
<svg class="b" style="left:1502.70px;top:521.70px" width="19.2" height="19.2" viewBox="0 0 19.2 19.2"><polygon points="9.60,0.21 12.16,7.06 19.47,7.38 13.75,11.94 15.70,18.99 9.60,14.95 3.50,18.99 5.45,11.94 -0.27,7.38 7.04,7.06" fill="#cccccc"/></svg>
<svg class="b" style="left:1548.00px;top:521.35px" width="16" height="20" viewBox="0 0 16 20"><path d="M3 1 H10.2 L14.8 5.6 V17.5 Q14.8 19 13.3 19 H3 Q1.5 19 1.5 17.5 V2.5 Q1.5 1 3 1 Z" fill="none" stroke="#111" stroke-width="1.9" stroke-linejoin="round"/><path d="M9.8 1.5 V6 H14.3" fill="none" stroke="#111" stroke-width="1.3"/><circle cx="11.3" cy="10.6" r="1.4" fill="#111"/><path d="M3.4 17.4 V15.6 L5.8 13.4 L8 15.3 L9.6 14.3 L12.9 16.8 V17.4 Z" fill="#111"/></svg>
<div class="a" style="left:1663.30px;top:524.60px;font-size:16.3px;color:#40464d;">February 7, 2019 1:53 pm</div>
<div class="b" style="left:237.30px;top:591.25px;width:20.00px;height:20.00px;background:#fff;border:1.3px solid #a0a3a6;box-shadow:inset 0 1px 2px rgba(0,0,0,.08)"></div>
<svg class="b" style="left:277.05px;top:588.00px" width="19.2" height="19.2" viewBox="0 0 19.2 19.2"><polygon points="9.60,0.21 12.16,7.06 19.47,7.38 13.75,11.94 15.70,18.99 9.60,14.95 3.50,18.99 5.45,11.94 -0.27,7.38 7.04,7.06" fill="#f2c12e"/></svg>
<div class="a w" style="left:337.00px;top:589.82px;font-size:17px;color:#1a64a0;font-weight:700;">1296</div>
<div class="b" style="left:408.30px;top:590.00px;width:14.60px;height:14.60px;background:#5ce73f;border-radius:50%"></div>
<div class="a" style="left:431.00px;top:590.31px;font-size:16.9px;color:#40464d;">Submitted</div>
<div class="a" style="left:539.50px;top:590.17px;font-size:17.05px;color:#1a64a0;">+1 (251) 948-2747</div>
<div class="a" style="left:717.00px;top:590.53px;font-size:16.65px;color:#1a64a0;line-height:23px;margin-top:-2.01px">mattis.euismod@erat.com</div>
<div class="a" style="left:972.50px;top:590.67px;font-size:16.5px;color:#40464d;line-height:23px;margin-top:-2.01px">February 23,<br>2013</div>
<div class="b" style="left:1121.40px;top:591.40px;width:126.60px;height:12.00px;background:#cccccc;border-radius:6px;overflow:hidden"></div>
<div class="b" style="left:1121.40px;top:591.40px;width:75.96px;height:12.00px;background:#4a90d9;border-radius:6px 0 0 6px"></div>
<div class="a" style="left:1122.00px;top:611.98px;font-size:14.5px;color:#72777c;font-style:italic">60</div>
<div class="b" style="left:1272.50px;top:588.25px;width:22.00px;height:21.00px;background:#e29ebe;border-radius:3px"></div>
<div class="a" style="left:1301.25px;top:593.21px;font-size:15.9px;color:#3c434a;font-family:Liberation Mono">#e29ebe</div>
<svg class="b" style="left:1393.90px;top:587.95px" width="19.2" height="19.2" viewBox="0 0 19.2 19.2"><polygon points="9.60,0.21 12.16,7.06 19.47,7.38 13.75,11.94 15.70,18.99 9.60,14.95 3.50,18.99 5.45,11.94 -0.27,7.38 7.04,7.06" fill="#f2c12e"/></svg>
<svg class="b" style="left:1421.10px;top:587.95px" width="19.2" height="19.2" viewBox="0 0 19.2 19.2"><polygon points="9.60,0.21 12.16,7.06 19.47,7.38 13.75,11.94 15.70,18.99 9.60,14.95 3.50,18.99 5.45,11.94 -0.27,7.38 7.04,7.06" fill="#cccccc"/></svg>
<svg class="b" style="left:1448.30px;top:587.95px" width="19.2" height="19.2" viewBox="0 0 19.2 19.2"><polygon points="9.60,0.21 12.16,7.06 19.47,7.38 13.75,11.94 15.70,18.99 9.60,14.95 3.50,18.99 5.45,11.94 -0.27,7.38 7.04,7.06" fill="#cccccc"/></svg>
<svg class="b" style="left:1475.50px;top:587.95px" width="19.2" height="19.2" viewBox="0 0 19.2 19.2"><polygon points="9.60,0.21 12.16,7.06 19.47,7.38 13.75,11.94 15.70,18.99 9.60,14.95 3.50,18.99 5.45,11.94 -0.27,7.38 7.04,7.06" fill="#cccccc"/></svg>
<svg class="b" style="left:1502.70px;top:587.95px" width="19.2" height="19.2" viewBox="0 0 19.2 19.2"><polygon points="9.60,0.21 12.16,7.06 19.47,7.38 13.75,11.94 15.70,18.99 9.60,14.95 3.50,18.99 5.45,11.94 -0.27,7.38 7.04,7.06" fill="#cccccc"/></svg>
<svg class="b" style="left:1548.00px;top:587.60px" width="16" height="20" viewBox="0 0 16 20"><path d="M3 1 H10.2 L14.8 5.6 V17.5 Q14.8 19 13.3 19 H3 Q1.5 19 1.5 17.5 V2.5 Q1.5 1 3 1 Z" fill="none" stroke="#111" stroke-width="1.9" stroke-linejoin="round"/><path d="M9.8 1.5 V6 H14.3" fill="none" stroke="#111" stroke-width="1.3"/><circle cx="11.3" cy="10.6" r="1.4" fill="#111"/><path d="M3.4 17.4 V15.6 L5.8 13.4 L8 15.3 L9.6 14.3 L12.9 16.8 V17.4 Z" fill="#111"/></svg>
<div class="a" style="left:1663.30px;top:590.85px;font-size:16.3px;color:#40464d;">February 7, 2019 1:53 pm</div>
<div class="b" style="left:237.30px;top:657.50px;width:20.00px;height:20.00px;background:#fff;border:1.3px solid #a0a3a6;box-shadow:inset 0 1px 2px rgba(0,0,0,.08)"></div>
<svg class="b" style="left:277.05px;top:654.25px" width="19.2" height="19.2" viewBox="0 0 19.2 19.2"><polygon points="9.60,0.21 12.16,7.06 19.47,7.38 13.75,11.94 15.70,18.99 9.60,14.95 3.50,18.99 5.45,11.94 -0.27,7.38 7.04,7.06" fill="#f2c12e"/></svg>
<div class="a w" style="left:337.00px;top:656.07px;font-size:17px;color:#1a64a0;font-weight:700;">1295</div>
<div class="b" style="left:408.30px;top:656.25px;width:14.60px;height:14.60px;background:#5ce73f;border-radius:50%"></div>
<div class="a" style="left:431.00px;top:656.56px;font-size:16.9px;color:#40464d;">Submitted</div>
<div class="a" style="left:539.50px;top:656.42px;font-size:17.05px;color:#1a64a0;">+1 (805) 195-6718</div>
<div class="a" style="left:717.00px;top:656.78px;font-size:16.65px;color:#1a64a0;line-height:23px;margin-top:-2.01px">diam.fermentum@vitae.com</div>
<div class="a" style="left:972.50px;top:656.92px;font-size:16.5px;color:#40464d;line-height:23px;margin-top:-2.01px">May 15, 1969</div>
<div class="b" style="left:1121.40px;top:657.65px;width:126.60px;height:12.00px;background:#cccccc;border-radius:6px;overflow:hidden"></div>
<div class="b" style="left:1121.40px;top:657.65px;width:111.41px;height:12.00px;background:#4a90d9;border-radius:6px 0 0 6px"></div>
<div class="a" style="left:1122.00px;top:678.23px;font-size:14.5px;color:#72777c;font-style:italic">88</div>
<div class="b" style="left:1272.50px;top:654.50px;width:22.00px;height:21.00px;background:#138770;border-radius:3px"></div>
<div class="a" style="left:1301.25px;top:659.46px;font-size:15.9px;color:#3c434a;font-family:Liberation Mono">#138770</div>
<svg class="b" style="left:1393.90px;top:654.20px" width="19.2" height="19.2" viewBox="0 0 19.2 19.2"><polygon points="9.60,0.21 12.16,7.06 19.47,7.38 13.75,11.94 15.70,18.99 9.60,14.95 3.50,18.99 5.45,11.94 -0.27,7.38 7.04,7.06" fill="#f2c12e"/></svg>
<svg class="b" style="left:1421.10px;top:654.20px" width="19.2" height="19.2" viewBox="0 0 19.2 19.2"><polygon points="9.60,0.21 12.16,7.06 19.47,7.38 13.75,11.94 15.70,18.99 9.60,14.95 3.50,18.99 5.45,11.94 -0.27,7.38 7.04,7.06" fill="#f2c12e"/></svg>
<svg class="b" style="left:1448.30px;top:654.20px" width="19.2" height="19.2" viewBox="0 0 19.2 19.2"><polygon points="9.60,0.21 12.16,7.06 19.47,7.38 13.75,11.94 15.70,18.99 9.60,14.95 3.50,18.99 5.45,11.94 -0.27,7.38 7.04,7.06" fill="#f2c12e"/></svg>
<svg class="b" style="left:1475.50px;top:654.20px" width="19.2" height="19.2" viewBox="0 0 19.2 19.2"><polygon points="9.60,0.21 12.16,7.06 19.47,7.38 13.75,11.94 15.70,18.99 9.60,14.95 3.50,18.99 5.45,11.94 -0.27,7.38 7.04,7.06" fill="#f2c12e"/></svg>
<svg class="b" style="left:1502.70px;top:654.20px" width="19.2" height="19.2" viewBox="0 0 19.2 19.2"><polygon points="9.60,0.21 12.16,7.06 19.47,7.38 13.75,11.94 15.70,18.99 9.60,14.95 3.50,18.99 5.45,11.94 -0.27,7.38 7.04,7.06" fill="#cccccc"/></svg>
<svg class="b" style="left:1548.00px;top:653.85px" width="16" height="20" viewBox="0 0 16 20"><path d="M3 1 H10.2 L14.8 5.6 V17.5 Q14.8 19 13.3 19 H3 Q1.5 19 1.5 17.5 V2.5 Q1.5 1 3 1 Z" fill="none" stroke="#111" stroke-width="1.9" stroke-linejoin="round"/><path d="M9.8 1.5 V6 H14.3" fill="none" stroke="#111" stroke-width="1.3"/><circle cx="11.3" cy="10.6" r="1.4" fill="#111"/><path d="M3.4 17.4 V15.6 L5.8 13.4 L8 15.3 L9.6 14.3 L12.9 16.8 V17.4 Z" fill="#111"/></svg>
<div class="a" style="left:1663.30px;top:657.10px;font-size:16.3px;color:#40464d;">February 7, 2019 1:53 pm</div>
<div class="b" style="left:237.30px;top:720.50px;width:20.00px;height:20.00px;background:#fff;border:1.3px solid #a0a3a6;box-shadow:inset 0 1px 2px rgba(0,0,0,.08)"></div>
<svg class="b" style="left:277.05px;top:717.25px" width="19.2" height="19.2" viewBox="0 0 19.2 19.2"><polygon points="9.60,0.21 12.16,7.06 19.47,7.38 13.75,11.94 15.70,18.99 9.60,14.95 3.50,18.99 5.45,11.94 -0.27,7.38 7.04,7.06" fill="#cccccc"/></svg>
<div class="a w" style="left:337.00px;top:719.07px;font-size:17px;color:#1a64a0;font-weight:700;">1294</div>
<div class="b" style="left:408.30px;top:719.25px;width:14.60px;height:14.60px;background:#5ce73f;border-radius:50%"></div>
<div class="a" style="left:431.00px;top:719.56px;font-size:16.9px;color:#40464d;">Submitted</div>
<div class="a" style="left:539.50px;top:719.42px;font-size:17.05px;color:#1a64a0;">+1 (202) 479-7297</div>
<div class="a" style="left:717.00px;top:719.78px;font-size:16.65px;color:#1a64a0;line-height:23px;margin-top:-2.01px">est.erat@malesuada.com</div>
<div class="a" style="left:972.50px;top:719.92px;font-size:16.5px;color:#40464d;line-height:23px;margin-top:-2.01px">September 19,<br>2049</div>
<div class="b" style="left:1121.40px;top:720.65px;width:126.60px;height:12.00px;background:#cccccc;border-radius:6px;overflow:hidden"></div>
<div class="b" style="left:1121.40px;top:720.65px;width:92.42px;height:12.00px;background:#4a90d9;border-radius:6px 0 0 6px"></div>
<div class="a" style="left:1122.00px;top:741.23px;font-size:14.5px;color:#72777c;font-style:italic">73</div>
<div class="b" style="left:1272.50px;top:717.50px;width:22.00px;height:21.00px;background:#699d7d;border-radius:3px"></div>
<div class="a" style="left:1301.25px;top:722.46px;font-size:15.9px;color:#3c434a;font-family:Liberation Mono">#699d7d</div>
<svg class="b" style="left:1393.90px;top:717.20px" width="19.2" height="19.2" viewBox="0 0 19.2 19.2"><polygon points="9.60,0.21 12.16,7.06 19.47,7.38 13.75,11.94 15.70,18.99 9.60,14.95 3.50,18.99 5.45,11.94 -0.27,7.38 7.04,7.06" fill="#cccccc"/></svg>
<svg class="b" style="left:1421.10px;top:717.20px" width="19.2" height="19.2" viewBox="0 0 19.2 19.2"><polygon points="9.60,0.21 12.16,7.06 19.47,7.38 13.75,11.94 15.70,18.99 9.60,14.95 3.50,18.99 5.45,11.94 -0.27,7.38 7.04,7.06" fill="#cccccc"/></svg>
<svg class="b" style="left:1448.30px;top:717.20px" width="19.2" height="19.2" viewBox="0 0 19.2 19.2"><polygon points="9.60,0.21 12.16,7.06 19.47,7.38 13.75,11.94 15.70,18.99 9.60,14.95 3.50,18.99 5.45,11.94 -0.27,7.38 7.04,7.06" fill="#cccccc"/></svg>
<svg class="b" style="left:1475.50px;top:717.20px" width="19.2" height="19.2" viewBox="0 0 19.2 19.2"><polygon points="9.60,0.21 12.16,7.06 19.47,7.38 13.75,11.94 15.70,18.99 9.60,14.95 3.50,18.99 5.45,11.94 -0.27,7.38 7.04,7.06" fill="#cccccc"/></svg>
<svg class="b" style="left:1502.70px;top:717.20px" width="19.2" height="19.2" viewBox="0 0 19.2 19.2"><polygon points="9.60,0.21 12.16,7.06 19.47,7.38 13.75,11.94 15.70,18.99 9.60,14.95 3.50,18.99 5.45,11.94 -0.27,7.38 7.04,7.06" fill="#cccccc"/></svg>
<svg class="b" style="left:1548.00px;top:716.85px" width="16" height="20" viewBox="0 0 16 20"><path d="M3 1 H10.2 L14.8 5.6 V17.5 Q14.8 19 13.3 19 H3 Q1.5 19 1.5 17.5 V2.5 Q1.5 1 3 1 Z" fill="none" stroke="#111" stroke-width="1.9" stroke-linejoin="round"/><path d="M9.8 1.5 V6 H14.3" fill="none" stroke="#111" stroke-width="1.3"/><circle cx="11.3" cy="10.6" r="1.4" fill="#111"/><path d="M3.4 17.4 V15.6 L5.8 13.4 L8 15.3 L9.6 14.3 L12.9 16.8 V17.4 Z" fill="#111"/></svg>
<div class="a" style="left:1663.30px;top:720.10px;font-size:16.3px;color:#40464d;">February 7, 2019 1:52 pm</div>
<div class="b" style="left:237.30px;top:786.75px;width:20.00px;height:20.00px;background:#fff;border:1.3px solid #a0a3a6;box-shadow:inset 0 1px 2px rgba(0,0,0,.08)"></div>
<svg class="b" style="left:277.05px;top:783.50px" width="19.2" height="19.2" viewBox="0 0 19.2 19.2"><polygon points="9.60,0.21 12.16,7.06 19.47,7.38 13.75,11.94 15.70,18.99 9.60,14.95 3.50,18.99 5.45,11.94 -0.27,7.38 7.04,7.06" fill="#cccccc"/></svg>
<div class="a w" style="left:337.00px;top:785.32px;font-size:17px;color:#1a64a0;font-weight:700;">1293</div>
<div class="b" style="left:408.30px;top:785.50px;width:14.60px;height:14.60px;background:#5ce73f;border-radius:50%"></div>
<div class="a" style="left:431.00px;top:785.81px;font-size:16.9px;color:#40464d;">Submitted</div>
<div class="a" style="left:539.50px;top:785.67px;font-size:17.05px;color:#1a64a0;">+1 (913) 579-3095</div>
<div class="a" style="left:717.00px;top:786.03px;font-size:16.65px;color:#1a64a0;line-height:23px;margin-top:-2.01px">sagittis.dictumst@eros.com</div>
<div class="a" style="left:972.50px;top:786.17px;font-size:16.5px;color:#40464d;line-height:23px;margin-top:-2.01px">September 4,<br>2054</div>
<div class="b" style="left:1121.40px;top:786.90px;width:126.60px;height:12.00px;background:#cccccc;border-radius:6px;overflow:hidden"></div>
<div class="b" style="left:1121.40px;top:786.90px;width:37.98px;height:12.00px;background:#4a90d9;border-radius:6px 0 0 6px"></div>
<div class="a" style="left:1122.00px;top:807.48px;font-size:14.5px;color:#72777c;font-style:italic">30</div>
<div class="b" style="left:1272.50px;top:783.75px;width:22.00px;height:21.00px;background:#e020e1;border-radius:3px"></div>
<div class="a" style="left:1301.25px;top:788.71px;font-size:15.9px;color:#3c434a;font-family:Liberation Mono">#e020e1</div>
<svg class="b" style="left:1393.90px;top:783.45px" width="19.2" height="19.2" viewBox="0 0 19.2 19.2"><polygon points="9.60,0.21 12.16,7.06 19.47,7.38 13.75,11.94 15.70,18.99 9.60,14.95 3.50,18.99 5.45,11.94 -0.27,7.38 7.04,7.06" fill="#f2c12e"/></svg>
<svg class="b" style="left:1421.10px;top:783.45px" width="19.2" height="19.2" viewBox="0 0 19.2 19.2"><polygon points="9.60,0.21 12.16,7.06 19.47,7.38 13.75,11.94 15.70,18.99 9.60,14.95 3.50,18.99 5.45,11.94 -0.27,7.38 7.04,7.06" fill="#f2c12e"/></svg>
<svg class="b" style="left:1448.30px;top:783.45px" width="19.2" height="19.2" viewBox="0 0 19.2 19.2"><polygon points="9.60,0.21 12.16,7.06 19.47,7.38 13.75,11.94 15.70,18.99 9.60,14.95 3.50,18.99 5.45,11.94 -0.27,7.38 7.04,7.06" fill="#f2c12e"/></svg>
<svg class="b" style="left:1475.50px;top:783.45px" width="19.2" height="19.2" viewBox="0 0 19.2 19.2"><polygon points="9.60,0.21 12.16,7.06 19.47,7.38 13.75,11.94 15.70,18.99 9.60,14.95 3.50,18.99 5.45,11.94 -0.27,7.38 7.04,7.06" fill="#f2c12e"/></svg>
<svg class="b" style="left:1502.70px;top:783.45px" width="19.2" height="19.2" viewBox="0 0 19.2 19.2"><polygon points="9.60,0.21 12.16,7.06 19.47,7.38 13.75,11.94 15.70,18.99 9.60,14.95 3.50,18.99 5.45,11.94 -0.27,7.38 7.04,7.06" fill="#cccccc"/></svg>
<svg class="b" style="left:1548.00px;top:783.10px" width="16" height="20" viewBox="0 0 16 20"><path d="M3 1 H10.2 L14.8 5.6 V17.5 Q14.8 19 13.3 19 H3 Q1.5 19 1.5 17.5 V2.5 Q1.5 1 3 1 Z" fill="none" stroke="#111" stroke-width="1.9" stroke-linejoin="round"/><path d="M9.8 1.5 V6 H14.3" fill="none" stroke="#111" stroke-width="1.3"/><circle cx="11.3" cy="10.6" r="1.4" fill="#111"/><path d="M3.4 17.4 V15.6 L5.8 13.4 L8 15.3 L9.6 14.3 L12.9 16.8 V17.4 Z" fill="#111"/></svg>
<div class="a" style="left:1663.30px;top:786.35px;font-size:16.3px;color:#40464d;">February 7, 2019 1:52 pm</div>
<div class="b" style="left:237.30px;top:853.25px;width:20.00px;height:20.00px;background:#fff;border:1.3px solid #a0a3a6;box-shadow:inset 0 1px 2px rgba(0,0,0,.08)"></div>
<svg class="b" style="left:277.05px;top:850.00px" width="19.2" height="19.2" viewBox="0 0 19.2 19.2"><polygon points="9.60,0.21 12.16,7.06 19.47,7.38 13.75,11.94 15.70,18.99 9.60,14.95 3.50,18.99 5.45,11.94 -0.27,7.38 7.04,7.06" fill="#cccccc"/></svg>
<div class="a w" style="left:337.00px;top:851.82px;font-size:17px;color:#1a64a0;font-weight:700;">1292</div>
<div class="b" style="left:408.30px;top:852.00px;width:14.60px;height:14.60px;background:#5ce73f;border-radius:50%"></div>
<div class="a" style="left:431.00px;top:852.31px;font-size:16.9px;color:#40464d;">Submitted</div>
<div class="a" style="left:539.50px;top:852.17px;font-size:17.05px;color:#1a64a0;">+1 (564) 312-1071</div>
<div class="a" style="left:717.00px;top:852.53px;font-size:16.65px;color:#1a64a0;line-height:23px;margin-top:-2.01px">dolor.mi@platea.com</div>
<div class="a" style="left:972.50px;top:852.67px;font-size:16.5px;color:#40464d;line-height:23px;margin-top:-2.01px">September 18,<br>2001</div>
<div class="b" style="left:1121.40px;top:853.40px;width:126.60px;height:12.00px;background:#cccccc;border-radius:6px;overflow:hidden"></div>
<div class="b" style="left:1121.40px;top:853.40px;width:77.23px;height:12.00px;background:#4a90d9;border-radius:6px 0 0 6px"></div>
<div class="a" style="left:1122.00px;top:873.98px;font-size:14.5px;color:#72777c;font-style:italic">61</div>
<div class="b" style="left:1272.50px;top:850.25px;width:22.00px;height:21.00px;background:#d54c8e;border-radius:3px"></div>
<div class="a" style="left:1301.25px;top:855.21px;font-size:15.9px;color:#3c434a;font-family:Liberation Mono">#d54c8e</div>
<svg class="b" style="left:1393.90px;top:849.95px" width="19.2" height="19.2" viewBox="0 0 19.2 19.2"><polygon points="9.60,0.21 12.16,7.06 19.47,7.38 13.75,11.94 15.70,18.99 9.60,14.95 3.50,18.99 5.45,11.94 -0.27,7.38 7.04,7.06" fill="#f2c12e"/></svg>
<svg class="b" style="left:1421.10px;top:849.95px" width="19.2" height="19.2" viewBox="0 0 19.2 19.2"><polygon points="9.60,0.21 12.16,7.06 19.47,7.38 13.75,11.94 15.70,18.99 9.60,14.95 3.50,18.99 5.45,11.94 -0.27,7.38 7.04,7.06" fill="#f2c12e"/></svg>
<svg class="b" style="left:1448.30px;top:849.95px" width="19.2" height="19.2" viewBox="0 0 19.2 19.2"><polygon points="9.60,0.21 12.16,7.06 19.47,7.38 13.75,11.94 15.70,18.99 9.60,14.95 3.50,18.99 5.45,11.94 -0.27,7.38 7.04,7.06" fill="#f2c12e"/></svg>
<svg class="b" style="left:1475.50px;top:849.95px" width="19.2" height="19.2" viewBox="0 0 19.2 19.2"><polygon points="9.60,0.21 12.16,7.06 19.47,7.38 13.75,11.94 15.70,18.99 9.60,14.95 3.50,18.99 5.45,11.94 -0.27,7.38 7.04,7.06" fill="#cccccc"/></svg>
<svg class="b" style="left:1502.70px;top:849.95px" width="19.2" height="19.2" viewBox="0 0 19.2 19.2"><polygon points="9.60,0.21 12.16,7.06 19.47,7.38 13.75,11.94 15.70,18.99 9.60,14.95 3.50,18.99 5.45,11.94 -0.27,7.38 7.04,7.06" fill="#cccccc"/></svg>
<svg class="b" style="left:1548.00px;top:849.60px" width="16" height="20" viewBox="0 0 16 20"><path d="M3 1 H10.2 L14.8 5.6 V17.5 Q14.8 19 13.3 19 H3 Q1.5 19 1.5 17.5 V2.5 Q1.5 1 3 1 Z" fill="none" stroke="#111" stroke-width="1.9" stroke-linejoin="round"/><path d="M9.8 1.5 V6 H14.3" fill="none" stroke="#111" stroke-width="1.3"/><circle cx="11.3" cy="10.6" r="1.4" fill="#111"/><path d="M3.4 17.4 V15.6 L5.8 13.4 L8 15.3 L9.6 14.3 L12.9 16.8 V17.4 Z" fill="#111"/></svg>
<div class="a" style="left:1663.30px;top:852.85px;font-size:16.3px;color:#40464d;">February 7, 2019 1:52 pm</div>
<div class="b" style="left:237.30px;top:919.50px;width:20.00px;height:20.00px;background:#fff;border:1.3px solid #a0a3a6;box-shadow:inset 0 1px 2px rgba(0,0,0,.08)"></div>
<svg class="b" style="left:277.05px;top:916.25px" width="19.2" height="19.2" viewBox="0 0 19.2 19.2"><polygon points="9.60,0.21 12.16,7.06 19.47,7.38 13.75,11.94 15.70,18.99 9.60,14.95 3.50,18.99 5.45,11.94 -0.27,7.38 7.04,7.06" fill="#f2c12e"/></svg>
<div class="a w" style="left:337.00px;top:918.07px;font-size:17px;color:#1a64a0;font-weight:700;">1291</div>
<div class="b" style="left:408.30px;top:918.25px;width:14.60px;height:14.60px;background:#5ce73f;border-radius:50%"></div>
<div class="a" style="left:431.00px;top:918.56px;font-size:16.9px;color:#40464d;">Submitted</div>
<div class="a" style="left:539.50px;top:918.42px;font-size:17.05px;color:#1a64a0;">+1 (517) 896-6376</div>
<div class="a" style="left:717.00px;top:918.78px;font-size:16.65px;color:#1a64a0;line-height:23px;margin-top:-2.01px">ut.inceptos@eros.com</div>
<div class="a" style="left:972.50px;top:918.92px;font-size:16.5px;color:#40464d;line-height:23px;margin-top:-2.01px">March 28, 1989</div>
<div class="b" style="left:1121.40px;top:919.65px;width:126.60px;height:12.00px;background:#cccccc;border-radius:6px;overflow:hidden"></div>
<div class="b" style="left:1121.40px;top:919.65px;width:6.33px;height:12.00px;background:#4a90d9;border-radius:6px 0 0 6px"></div>
<div class="a" style="left:1122.00px;top:940.23px;font-size:14.5px;color:#72777c;font-style:italic">5</div>
<div class="b" style="left:1272.50px;top:916.50px;width:22.00px;height:21.00px;background:#948718;border-radius:3px"></div>
<div class="a" style="left:1301.25px;top:921.46px;font-size:15.9px;color:#3c434a;font-family:Liberation Mono">#948718</div>
<svg class="b" style="left:1393.90px;top:916.20px" width="19.2" height="19.2" viewBox="0 0 19.2 19.2"><polygon points="9.60,0.21 12.16,7.06 19.47,7.38 13.75,11.94 15.70,18.99 9.60,14.95 3.50,18.99 5.45,11.94 -0.27,7.38 7.04,7.06" fill="#f2c12e"/></svg>
<svg class="b" style="left:1421.10px;top:916.20px" width="19.2" height="19.2" viewBox="0 0 19.2 19.2"><polygon points="9.60,0.21 12.16,7.06 19.47,7.38 13.75,11.94 15.70,18.99 9.60,14.95 3.50,18.99 5.45,11.94 -0.27,7.38 7.04,7.06" fill="#cccccc"/></svg>
<svg class="b" style="left:1448.30px;top:916.20px" width="19.2" height="19.2" viewBox="0 0 19.2 19.2"><polygon points="9.60,0.21 12.16,7.06 19.47,7.38 13.75,11.94 15.70,18.99 9.60,14.95 3.50,18.99 5.45,11.94 -0.27,7.38 7.04,7.06" fill="#cccccc"/></svg>
<svg class="b" style="left:1475.50px;top:916.20px" width="19.2" height="19.2" viewBox="0 0 19.2 19.2"><polygon points="9.60,0.21 12.16,7.06 19.47,7.38 13.75,11.94 15.70,18.99 9.60,14.95 3.50,18.99 5.45,11.94 -0.27,7.38 7.04,7.06" fill="#cccccc"/></svg>
<svg class="b" style="left:1502.70px;top:916.20px" width="19.2" height="19.2" viewBox="0 0 19.2 19.2"><polygon points="9.60,0.21 12.16,7.06 19.47,7.38 13.75,11.94 15.70,18.99 9.60,14.95 3.50,18.99 5.45,11.94 -0.27,7.38 7.04,7.06" fill="#cccccc"/></svg>
<svg class="b" style="left:1548.00px;top:915.85px" width="16" height="20" viewBox="0 0 16 20"><path d="M3 1 H10.2 L14.8 5.6 V17.5 Q14.8 19 13.3 19 H3 Q1.5 19 1.5 17.5 V2.5 Q1.5 1 3 1 Z" fill="none" stroke="#111" stroke-width="1.9" stroke-linejoin="round"/><path d="M9.8 1.5 V6 H14.3" fill="none" stroke="#111" stroke-width="1.3"/><circle cx="11.3" cy="10.6" r="1.4" fill="#111"/><path d="M3.4 17.4 V15.6 L5.8 13.4 L8 15.3 L9.6 14.3 L12.9 16.8 V17.4 Z" fill="#111"/></svg>
<div class="a" style="left:1663.30px;top:919.10px;font-size:16.3px;color:#40464d;">February 7, 2019 1:52 pm</div>
<div class="b" style="left:237.30px;top:982.05px;width:20.00px;height:20.00px;background:#fff;border:1.3px solid #a0a3a6;box-shadow:inset 0 1px 2px rgba(0,0,0,.08)"></div>
<svg class="b" style="left:277.05px;top:978.80px" width="19.2" height="19.2" viewBox="0 0 19.2 19.2"><polygon points="9.60,0.21 12.16,7.06 19.47,7.38 13.75,11.94 15.70,18.99 9.60,14.95 3.50,18.99 5.45,11.94 -0.27,7.38 7.04,7.06" fill="#cccccc"/></svg>
<div class="a w" style="left:337.00px;top:980.62px;font-size:17px;color:#1a64a0;font-weight:700;">1290</div>
<div class="b" style="left:408.30px;top:980.80px;width:14.60px;height:14.60px;background:#5ce73f;border-radius:50%"></div>
<div class="a" style="left:431.00px;top:981.11px;font-size:16.9px;color:#40464d;">Submitted</div>
<div class="a" style="left:539.50px;top:980.97px;font-size:17.05px;color:#1a64a0;">+1 (904) 124-1984</div>
<div class="a" style="left:717.00px;top:981.33px;font-size:16.65px;color:#1a64a0;line-height:23px;margin-top:-2.01px">pellentesque.tempor@incepto<br>s.com</div>
<div class="a" style="left:972.50px;top:981.47px;font-size:16.5px;color:#40464d;line-height:23px;margin-top:-2.01px">June 4, 2009</div>
<div class="b" style="left:1121.40px;top:982.20px;width:126.60px;height:12.00px;background:#cccccc;border-radius:6px;overflow:hidden"></div>
<div class="b" style="left:1121.40px;top:982.20px;width:110.14px;height:12.00px;background:#4a90d9;border-radius:6px 0 0 6px"></div>
<div class="a" style="left:1122.00px;top:1002.78px;font-size:14.5px;color:#72777c;font-style:italic">87</div>
<div class="b" style="left:1272.50px;top:979.05px;width:22.00px;height:21.00px;background:#69d975;border-radius:3px"></div>
<div class="a" style="left:1301.25px;top:984.01px;font-size:15.9px;color:#3c434a;font-family:Liberation Mono">#69d975</div>
<svg class="b" style="left:1393.90px;top:978.75px" width="19.2" height="19.2" viewBox="0 0 19.2 19.2"><polygon points="9.60,0.21 12.16,7.06 19.47,7.38 13.75,11.94 15.70,18.99 9.60,14.95 3.50,18.99 5.45,11.94 -0.27,7.38 7.04,7.06" fill="#f2c12e"/></svg>
<svg class="b" style="left:1421.10px;top:978.75px" width="19.2" height="19.2" viewBox="0 0 19.2 19.2"><polygon points="9.60,0.21 12.16,7.06 19.47,7.38 13.75,11.94 15.70,18.99 9.60,14.95 3.50,18.99 5.45,11.94 -0.27,7.38 7.04,7.06" fill="#f2c12e"/></svg>
<svg class="b" style="left:1448.30px;top:978.75px" width="19.2" height="19.2" viewBox="0 0 19.2 19.2"><polygon points="9.60,0.21 12.16,7.06 19.47,7.38 13.75,11.94 15.70,18.99 9.60,14.95 3.50,18.99 5.45,11.94 -0.27,7.38 7.04,7.06" fill="#f2c12e"/></svg>
<svg class="b" style="left:1475.50px;top:978.75px" width="19.2" height="19.2" viewBox="0 0 19.2 19.2"><polygon points="9.60,0.21 12.16,7.06 19.47,7.38 13.75,11.94 15.70,18.99 9.60,14.95 3.50,18.99 5.45,11.94 -0.27,7.38 7.04,7.06" fill="#f2c12e"/></svg>
<svg class="b" style="left:1502.70px;top:978.75px" width="19.2" height="19.2" viewBox="0 0 19.2 19.2"><polygon points="9.60,0.21 12.16,7.06 19.47,7.38 13.75,11.94 15.70,18.99 9.60,14.95 3.50,18.99 5.45,11.94 -0.27,7.38 7.04,7.06" fill="#cccccc"/></svg>
<svg class="b" style="left:1548.00px;top:978.40px" width="16" height="20" viewBox="0 0 16 20"><path d="M3 1 H10.2 L14.8 5.6 V17.5 Q14.8 19 13.3 19 H3 Q1.5 19 1.5 17.5 V2.5 Q1.5 1 3 1 Z" fill="none" stroke="#111" stroke-width="1.9" stroke-linejoin="round"/><path d="M9.8 1.5 V6 H14.3" fill="none" stroke="#111" stroke-width="1.3"/><circle cx="11.3" cy="10.6" r="1.4" fill="#111"/><path d="M3.4 17.4 V15.6 L5.8 13.4 L8 15.3 L9.6 14.3 L12.9 16.8 V17.4 Z" fill="#111"/></svg>
<div class="a" style="left:1663.30px;top:981.65px;font-size:16.3px;color:#40464d;">February 7, 2019 1:52 pm</div>
<div class="b" style="left:237.30px;top:1047.95px;width:20.00px;height:20.00px;background:#fff;border:1.3px solid #a0a3a6;box-shadow:inset 0 1px 2px rgba(0,0,0,.08)"></div>
<svg class="b" style="left:277.05px;top:1044.70px" width="19.2" height="19.2" viewBox="0 0 19.2 19.2"><polygon points="9.60,0.21 12.16,7.06 19.47,7.38 13.75,11.94 15.70,18.99 9.60,14.95 3.50,18.99 5.45,11.94 -0.27,7.38 7.04,7.06" fill="#f2c12e"/></svg>
<div class="a w" style="left:337.00px;top:1046.52px;font-size:17px;color:#1a64a0;font-weight:700;">1289</div>
<div class="b" style="left:408.30px;top:1046.70px;width:14.60px;height:14.60px;background:#5ce73f;border-radius:50%"></div>
<div class="a" style="left:431.00px;top:1047.01px;font-size:16.9px;color:#40464d;">Submitted</div>
<div class="a" style="left:539.50px;top:1046.87px;font-size:17.05px;color:#1a64a0;">+1 (949) 566-6418</div>
<div class="a" style="left:717.00px;top:1047.23px;font-size:16.65px;color:#1a64a0;line-height:23px;margin-top:-2.01px">morbi.tempor@odio.com</div>
<div class="a" style="left:972.50px;top:1047.37px;font-size:16.5px;color:#40464d;line-height:23px;margin-top:-2.01px">December 2,<br>2009</div>
<div class="b" style="left:1121.40px;top:1048.10px;width:126.60px;height:12.00px;background:#cccccc;border-radius:6px;overflow:hidden"></div>
<div class="b" style="left:1121.40px;top:1048.10px;width:63.30px;height:12.00px;background:#4a90d9;border-radius:6px 0 0 6px"></div>
<div class="a" style="left:1122.00px;top:1068.68px;font-size:14.5px;color:#72777c;font-style:italic">50</div>
<div class="b" style="left:1272.50px;top:1044.95px;width:22.00px;height:21.00px;background:#2a93f3;border-radius:3px"></div>
<div class="a" style="left:1301.25px;top:1049.91px;font-size:15.9px;color:#3c434a;font-family:Liberation Mono">#2a93f3</div>
<svg class="b" style="left:1393.90px;top:1044.65px" width="19.2" height="19.2" viewBox="0 0 19.2 19.2"><polygon points="9.60,0.21 12.16,7.06 19.47,7.38 13.75,11.94 15.70,18.99 9.60,14.95 3.50,18.99 5.45,11.94 -0.27,7.38 7.04,7.06" fill="#cccccc"/></svg>
<svg class="b" style="left:1421.10px;top:1044.65px" width="19.2" height="19.2" viewBox="0 0 19.2 19.2"><polygon points="9.60,0.21 12.16,7.06 19.47,7.38 13.75,11.94 15.70,18.99 9.60,14.95 3.50,18.99 5.45,11.94 -0.27,7.38 7.04,7.06" fill="#cccccc"/></svg>
<svg class="b" style="left:1448.30px;top:1044.65px" width="19.2" height="19.2" viewBox="0 0 19.2 19.2"><polygon points="9.60,0.21 12.16,7.06 19.47,7.38 13.75,11.94 15.70,18.99 9.60,14.95 3.50,18.99 5.45,11.94 -0.27,7.38 7.04,7.06" fill="#cccccc"/></svg>
<svg class="b" style="left:1475.50px;top:1044.65px" width="19.2" height="19.2" viewBox="0 0 19.2 19.2"><polygon points="9.60,0.21 12.16,7.06 19.47,7.38 13.75,11.94 15.70,18.99 9.60,14.95 3.50,18.99 5.45,11.94 -0.27,7.38 7.04,7.06" fill="#cccccc"/></svg>
<svg class="b" style="left:1502.70px;top:1044.65px" width="19.2" height="19.2" viewBox="0 0 19.2 19.2"><polygon points="9.60,0.21 12.16,7.06 19.47,7.38 13.75,11.94 15.70,18.99 9.60,14.95 3.50,18.99 5.45,11.94 -0.27,7.38 7.04,7.06" fill="#cccccc"/></svg>
<svg class="b" style="left:1548.00px;top:1044.30px" width="16" height="20" viewBox="0 0 16 20"><path d="M3 1 H10.2 L14.8 5.6 V17.5 Q14.8 19 13.3 19 H3 Q1.5 19 1.5 17.5 V2.5 Q1.5 1 3 1 Z" fill="none" stroke="#111" stroke-width="1.9" stroke-linejoin="round"/><path d="M9.8 1.5 V6 H14.3" fill="none" stroke="#111" stroke-width="1.3"/><circle cx="11.3" cy="10.6" r="1.4" fill="#111"/><path d="M3.4 17.4 V15.6 L5.8 13.4 L8 15.3 L9.6 14.3 L12.9 16.8 V17.4 Z" fill="#111"/></svg>
<div class="a" style="left:1663.30px;top:1047.55px;font-size:16.3px;color:#40464d;">February 7, 2019 1:52 pm</div>
</body></html>
